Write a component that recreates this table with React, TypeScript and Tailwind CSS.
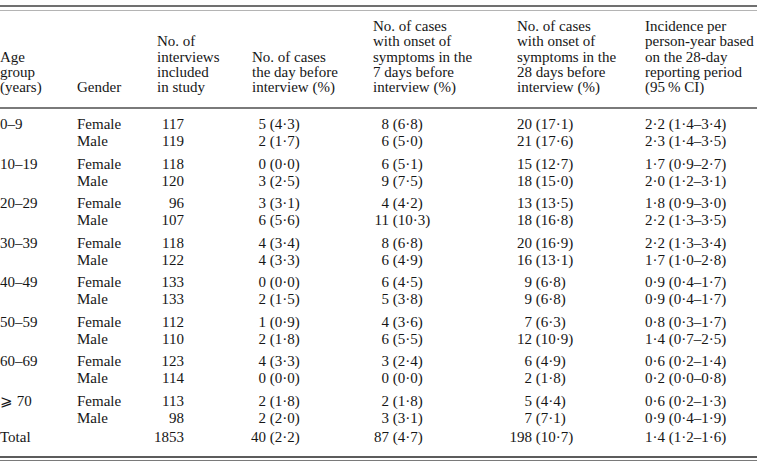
type Row = {
  gender?: string;
  n: string;
  day: [string, string];
  d7: [string, string];
  d28: [string, string];
  inc: string;
};

type Group = { age: string; rows: Row[] };

const groups: Group[] = [
  {
    age: '0–9',
    rows: [
      { gender: 'Female', n: '117', day: ['5', '4·3'], d7: ['8', '6·8'], d28: ['20', '17·1'], inc: '2·2 (1·4–3·4)' },
      { gender: 'Male', n: '119', day: ['2', '1·7'], d7: ['6', '5·0'], d28: ['21', '17·6'], inc: '2·3 (1·4–3·5)' },
    ],
  },
  {
    age: '10–19',
    rows: [
      { gender: 'Female', n: '118', day: ['0', '0·0'], d7: ['6', '5·1'], d28: ['15', '12·7'], inc: '1·7 (0·9–2·7)' },
      { gender: 'Male', n: '120', day: ['3', '2·5'], d7: ['9', '7·5'], d28: ['18', '15·0'], inc: '2·0 (1·2–3·1)' },
    ],
  },
  {
    age: '20–29',
    rows: [
      { gender: 'Female', n: '96', day: ['3', '3·1'], d7: ['4', '4·2'], d28: ['13', '13·5'], inc: '1·8 (0·9–3·0)' },
      { gender: 'Male', n: '107', day: ['6', '5·6'], d7: ['11', '10·3'], d28: ['18', '16·8'], inc: '2·2 (1·3–3·5)' },
    ],
  },
  {
    age: '30–39',
    rows: [
      { gender: 'Female', n: '118', day: ['4', '3·4'], d7: ['8', '6·8'], d28: ['20', '16·9'], inc: '2·2 (1·3–3·4)' },
      { gender: 'Male', n: '122', day: ['4', '3·3'], d7: ['6', '4·9'], d28: ['16', '13·1'], inc: '1·7 (1·0–2·8)' },
    ],
  },
  {
    age: '40–49',
    rows: [
      { gender: 'Female', n: '133', day: ['0', '0·0'], d7: ['6', '4·5'], d28: ['9', '6·8'], inc: '0·9 (0·4–1·7)' },
      { gender: 'Male', n: '133', day: ['2', '1·5'], d7: ['5', '3·8'], d28: ['9', '6·8'], inc: '0·9 (0·4–1·7)' },
    ],
  },
  {
    age: '50–59',
    rows: [
      { gender: 'Female', n: '112', day: ['1', '0·9'], d7: ['4', '3·6'], d28: ['7', '6·3'], inc: '0·8 (0·3–1·7)' },
      { gender: 'Male', n: '110', day: ['2', '1·8'], d7: ['6', '5·5'], d28: ['12', '10·9'], inc: '1·4 (0·7–2·5)' },
    ],
  },
  {
    age: '60–69',
    rows: [
      { gender: 'Female', n: '123', day: ['4', '3·3'], d7: ['3', '2·4'], d28: ['6', '4·9'], inc: '0·6 (0·2–1·4)' },
      { gender: 'Male', n: '114', day: ['0', '0·0'], d7: ['0', '0·0'], d28: ['2', '1·8'], inc: '0·2 (0·0–0·8)' },
    ],
  },
  {
    age: '⩾ 70',
    rows: [
      { gender: 'Female', n: '113', day: ['2', '1·8'], d7: ['2', '1·8'], d28: ['5', '4·4'], inc: '0·6 (0·2–1·3)' },
      { gender: 'Male', n: '98', day: ['2', '2·0'], d7: ['3', '3·1'], d28: ['7', '7·1'], inc: '0·9 (0·4–1·9)' },
    ],
  },
];

const total: Row = { n: '1853', day: ['40', '2·2'], d7: ['87', '4·7'], d28: ['198', '10·7'], inc: '1·4 (1·2–1·6)' };

const cols = 'grid grid-cols-[77px_80px_95px_121px_144px_128px_112px]';

// count right-aligned to a fixed edge, percentage follows
const Cell = ({ v, w }: { v: [string, string]; w: string }) => (
  <div className="flex whitespace-nowrap">
    <span className={`flex justify-end ${w}`}>{v[0]}</span>
    <span>&nbsp;({v[1]})</span>
  </div>
);

const DataRow = ({ age, row }: { age?: string; row: Row }) => (
  <div className={`${cols} h-[17px] items-center`}>
    <div className="whitespace-nowrap">{age}</div>
    <div>{row.gender}</div>
    <div className="flex">
      <span className="flex w-[27px] justify-end">{row.n}</span>
    </div>
    <Cell v={row.day} w="w-[14px]" />
    <Cell v={row.d7} w="w-[16px]" />
    <Cell v={row.d28} w="w-[15px]" />
    <div className="whitespace-nowrap">{row.inc}</div>
  </div>
);

export default function App() {
  return (
    <div
      className="w-[757px] h-[461px] overflow-hidden bg-white text-[#161616] text-[15px]"
      style={{ fontFamily: '"Liberation Serif", "DejaVu Serif", serif' }}
    >
      {/* top double rule */}
      <div className="mt-[5px] h-[2px] bg-[#707070]" />
      <div className="mt-[3px] h-px bg-[#b4b4b4]" />

      {/* header */}
      <div className={`${cols} items-end pt-[8px] pb-[12px] leading-[15.25px] whitespace-nowrap`}>
        <div>
          Age<br />group<br />(years)
        </div>
        <div>Gender</div>
        <div>
          No. of<br />interviews<br />included<br />in study
        </div>
        <div>
          No. of cases<br />the day before<br />interview (%)
        </div>
        <div>
          No. of cases<br />with onset of<br />symptoms in the<br />7 days before<br />interview (%)
        </div>
        <div>
          No. of cases<br />with onset of<br />symptoms in the<br />28 days before<br />interview (%)
        </div>
        <div>
          Incidence per<br />person-year based<br />on the 28-day<br />reporting period<br />(95&#8239;% CI)
        </div>
      </div>
      <div className="h-[2px] bg-[#7a7a7a]" />

      {/* body */}
      <div className="pt-[7px] leading-[17px]">
        {groups.map((g, i) => (
          <div key={g.age} className={i === 0 ? '' : 'pt-[5.5px]'}>
            {g.rows.map((r, j) => (
              <DataRow key={j} age={j === 0 ? g.age : undefined} row={r} />
            ))}
          </div>
        ))}
        <div className="pt-[2px]">
          <DataRow age="Total" row={total} />
        </div>
      </div>

      {/* bottom double rule */}
      <div className="mt-[10px] h-[2px] bg-[#5c5c5c]" />
      <div className="mt-[2px] h-px bg-[#7a7a7a]" />
    </div>
  );
}
